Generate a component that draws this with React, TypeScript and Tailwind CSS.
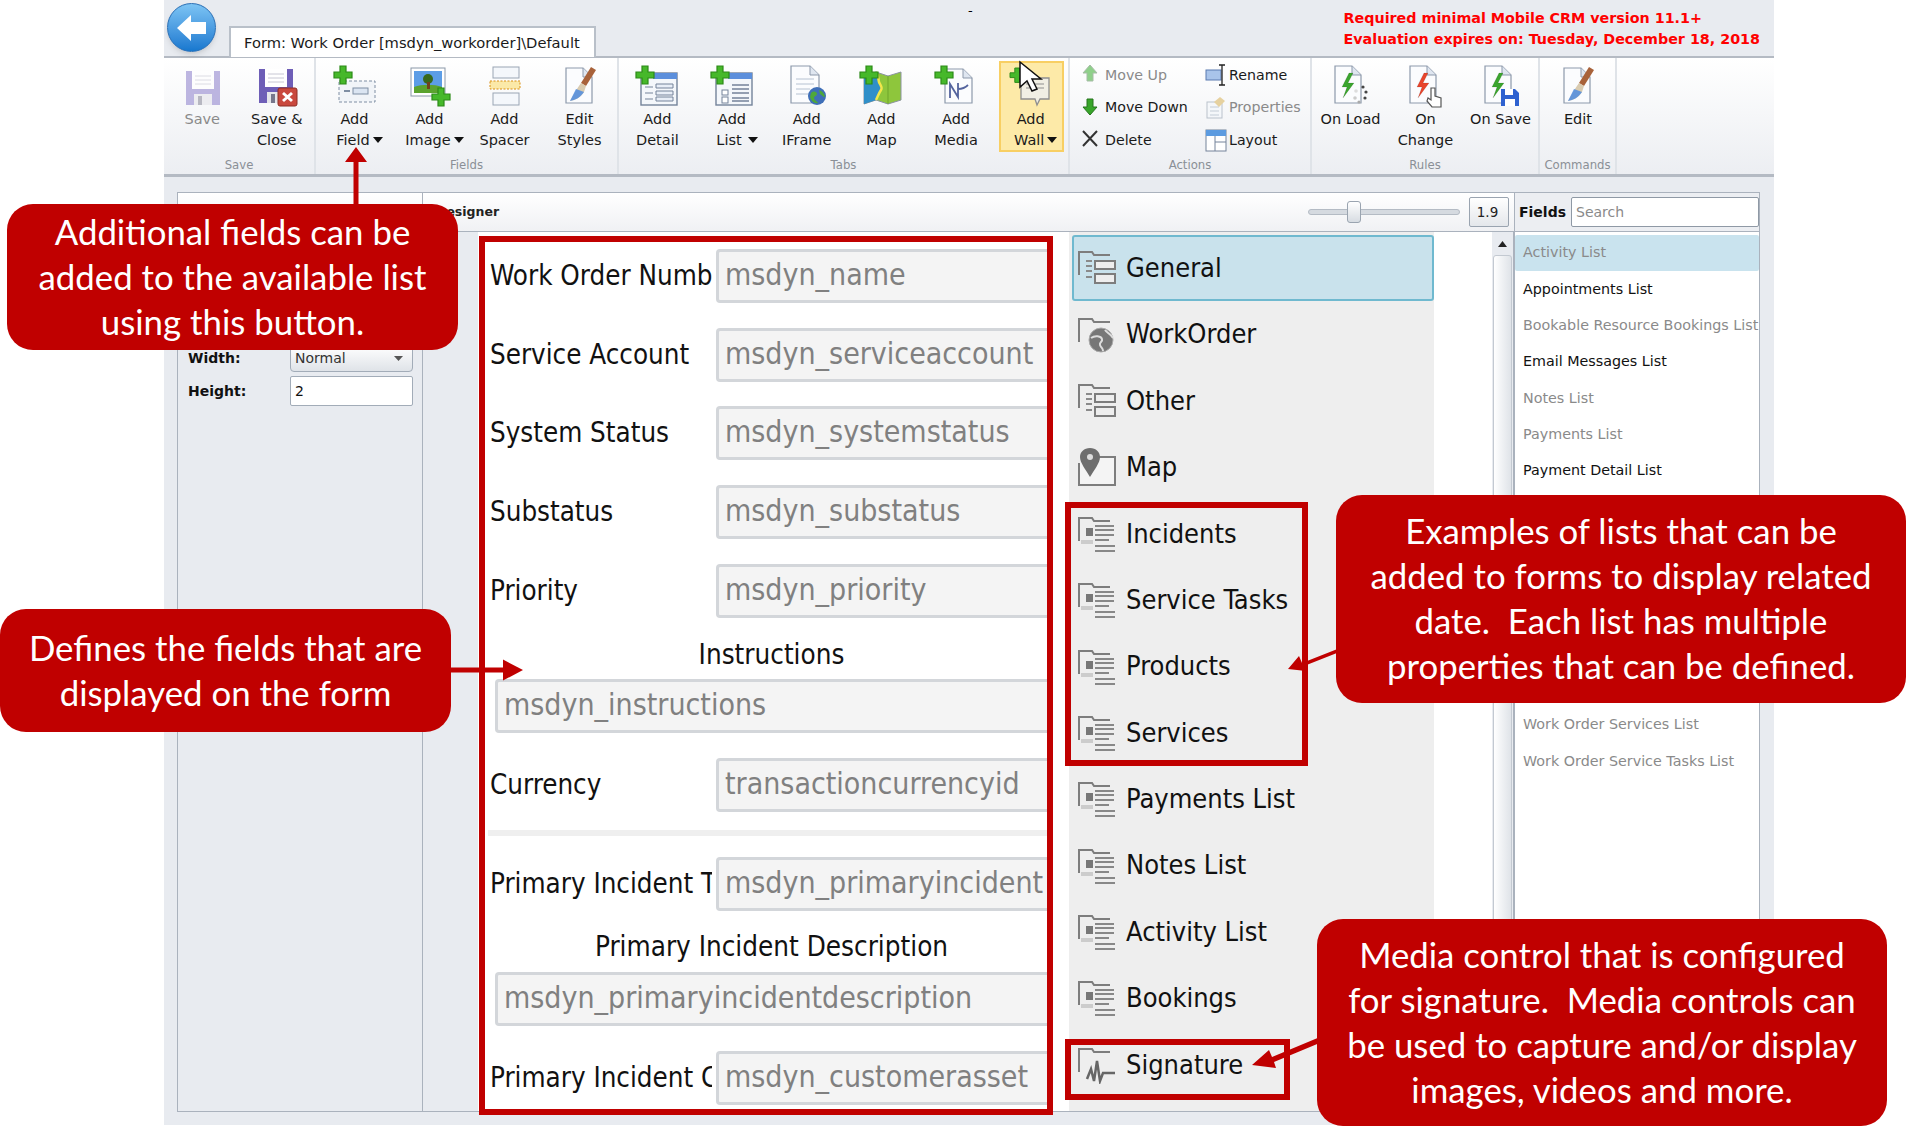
import React from 'react';

const Cross = ({ x, y, s = 1 }: { x: number; y: number; s?: number }) => (
  <path
    transform={`translate(${x} ${y}) scale(${s})`}
    d="M6 0h6v6h6v6h-6v6H6v-6H0V6h6z"
    fill="#46b82a"
    stroke="#2c8a18"
    strokeWidth="1.2"
  />
);

const Doc = ({ x = 10, y = 2, w = 26, h = 36 }: { x?: number; y?: number; w?: number; h?: number }) => (
  <g>
    <path d={`M${x} ${y}h${w - 9}l9 9v${h - 9}h-${w}z`} fill="#fbfcfe" stroke="#8d99ab" strokeWidth="1.2" />
    <path d={`M${x + w - 9} ${y}v9h9`} fill="#dfe6f0" stroke="#8d99ab" strokeWidth="1" />
  </g>
);

const Brush = () => (
  <g>
    <path d="M33 2l5 3-10 16-5-3z" fill="#a8623a" />
    <path d="M23 18l5 3-2 6c-3 5-8 8-14 9 3-5 6-11 11-18z" fill="#d9cbb0" />
    <path d="M12 36c5-1 10-3 14-9l-8-3c-2 4-4 8-6 12z" fill="#4f8de0" opacity=".85" />
  </g>
);

const Bolt = ({ color }: { color: string }) => <path d="M20 8l-7 14h5l-4 11 11-15h-6l5-10z" fill={color} stroke="#00000030" strokeWidth=".5" />;

const Win = ({ children }: { children: React.ReactNode }) => (
  <g>
    <rect x="6" y="8" width="36" height="32" fill="#f4f7fb" stroke="#74839a" strokeWidth="1.4" />
    <rect x="18" y="8" width="24" height="6" fill="#5c8fdc" />
    {children}
  </g>
);

const icons: Record<string, React.ReactNode> = {
  save: (
    <g opacity=".6">
      <path d="M6 6h34v34H6z" fill="#9488cf" />
      <rect x="12" y="6" width="22" height="18" fill="#fff" />
      <path d="M15 11h16M15 15h16M15 19h16" stroke="#c8c8d4" />
      <rect x="14" y="29" width="18" height="11" fill="#e5e5ea" />
      <rect x="18" y="31" width="4" height="9" fill="#8c8c9c" />
    </g>
  ),
  saveClose: (
    <g>
      <path d="M4 4h34v34H4z" fill="#6e5eb7" />
      <rect x="10" y="4" width="22" height="18" fill="#fff" />
      <path d="M13 9h16M13 13h16M13 17h16" stroke="#c8c8d4" />
      <rect x="12" y="27" width="18" height="11" fill="#e5e5ea" />
      <rect x="16" y="29" width="4" height="9" fill="#77778c" />
      <rect x="23" y="23" width="19" height="18" rx="2" fill="#c9483d" stroke="#8e2c24" />
      <path d="M28 28l9 8M37 28l-9 8" stroke="#fff" strokeWidth="3" />
    </g>
  ),
  addField: (
    <g>
      <rect x="6" y="16" width="36" height="21" fill="#f1f4f8" stroke="#7f8ea3" strokeDasharray="3 2" />
      <path d="M11 26h6" stroke="#7f8ea3" strokeWidth="2" />
      <rect x="20" y="23" width="15" height="6" fill="#dbe5f2" stroke="#7f8ea3" />
      <Cross x={1} y={1} />
    </g>
  ),
  addImage: (
    <g>
      <rect x="3" y="3" width="34" height="28" fill="#fff" stroke="#8a97a8" />
      <rect x="6" y="6" width="28" height="22" fill="#5c9de6" />
      <path d="M6 22c8-3 20-3 28 0v6H6z" fill="#5ba32e" />
      <circle cx="20" cy="14" r="5" fill="#38691c" />
      <rect x="19" y="17" width="3" height="7" fill="#70431c" />
      <Cross x={24} y={23} />
    </g>
  ),
  addSpacer: (
    <g>
      <rect x="10" y="2" width="26" height="11" fill="#f4f7fb" stroke="#9aa5b4" />
      <rect x="10" y="28" width="26" height="12" fill="#f4f7fb" stroke="#9aa5b4" />
      <rect x="7" y="16" width="30" height="8" fill="#fbe9a8" stroke="#d98f12" strokeDasharray="2 1.5" />
    </g>
  ),
  edit: (
    <g>
      <Doc x={8} y={3} w={26} h={35} />
      <Brush />
    </g>
  ),
  addDetail: (
    <g>
      <Win>
        <path d="M10 22h8M10 28h8M10 34h8" stroke="#74839a" />
        <path d="M21 19h17v4H21zM21 26h17v4H21zM21 32h17v4H21z" fill="#e8eef7" stroke="#74839a" />
      </Win>
      <Cross x={1} y={1} />
    </g>
  ),
  addList: (
    <g>
      <Win>
        <rect x="12" y="25" width="6" height="5" fill="#fff" stroke="#74839a" />
        <rect x="12" y="32" width="6" height="6" fill="#fff" stroke="#74839a" />
        <path d="M22 20h17M22 24h17M22 28h17M22 33h17M22 36h17" stroke="#74839a" strokeWidth="1.3" />
      </Win>
      <Cross x={1} y={1} />
    </g>
  ),
  iframe: (
    <g>
      <Doc x={6} y={1} w={28} h={37} />
      <path d="M11 14h18M11 19h18M11 24h14M11 29h12" stroke="#b6c2d2" />
      <circle cx="32" cy="31" r="9" fill="#3f6fb8" />
      <path d="M26 28c3-3 6-1 6 1s-3 2-3 4 3 3 4 5c-3 1-7-2-8-6zM34 25c3 1 6 4 6 7-2 0-3-2-5-3z" fill="#4ea83a" />
    </g>
  ),
  addMap: (
    <g>
      <path d="M5 11l12-4 12 4 13-4v28l-13 4-12-4-12 4z" fill="#8ec63c" stroke="#8b93a0" />
      <path d="M5 11l12-4c3 4 2 7 3 10s4 5 2 8-3 6-5 10l-12 4z" fill="#2f8fc9" />
      <path d="M17 7c3 4 2 7 3 10s4 5 2 8-3 6-5 10" fill="none" stroke="#f2e64a" strokeWidth="2.5" />
      <path d="M29 11v28" stroke="#6fa52a" />
      <Cross x={1} y={1} />
    </g>
  ),
  addMedia: (
    <g>
      <Doc x={11} y={4} w={27} h={34} />
      <path d="M16 33V19l8 13V18M24 24c4 0 8-2 10-4" fill="none" stroke="#54649e" strokeWidth="1.8" />
      <Cross x={1} y={1} />
    </g>
  ),
  addWall: (
    <g>
      <Cross x={1} y={3} s={0.8} />
      <path d="M12 13h28v21H31l-3 6-2-6H12z" fill="#f1efe4" stroke="#8f8f8f" strokeWidth="1.3" />
      <path d="M17 19h18M17 23h18" stroke="#8f8f8f" />
    </g>
  ),
  onLoad: (
    <g>
      <Doc x={6} y={1} w={26} h={37} />
      <Bolt color="#3ba52f" />
      <g fill="#444">
        <circle cx="34" cy="22" r="1.6" />
        <circle cx="37" cy="27" r="1.6" />
        <circle cx="36" cy="33" r="1.6" />
        <circle cx="30" cy="37" r="1.6" fill="#aaa" />
        <circle cx="26" cy="33" r="1.8" fill="#ccc" />
        <circle cx="27" cy="26" r="1.8" fill="#ddd" />
      </g>
    </g>
  ),
  onChange: (
    <g>
      <Doc x={6} y={1} w={26} h={37} />
      <Bolt color="#e8452c" />
      <path d="M27 23v12l-3-2-1 3 5 6h9v-9l-6-2v-8z" fill="#fff" stroke="#555" strokeWidth="1.2" />
    </g>
  ),
  onSave: (
    <g>
      <Doc x={6} y={1} w={26} h={37} />
      <Bolt color="#3ba52f" />
      <path d="M22 24h14l4 4v13H22z" fill="#2f62d0" />
      <rect x="26" y="24" width="8" height="6" fill="#fff" />
      <rect x="26" y="34" width="10" height="7" fill="#fff" />
    </g>
  ),
};

const small: Record<string, React.ReactNode> = {
  up: <path d="M9 1l7 8h-4v8H6V9H2z" fill="#8fd08a" stroke="#a6bca6" />,
  down: <path d="M9 19l7-8h-4V3H6v8H2z" fill="#38a52a" stroke="#24751c" />,
  del: <path d="M2 2l14 15M16 2L2 17" stroke="#333" strokeWidth="2" />,
  rename: (
    <g>
      <rect x="1" y="6" width="15" height="10" fill="#a9c4ea" stroke="#5b7bb0" />
      <path d="M14 1h6M17 1v20M14 21h6" stroke="#222" strokeWidth="1.3" />
    </g>
  ),
  props: (
    <g opacity=".55">
      <rect x="2" y="6" width="15" height="16" fill="#f4f7fb" stroke="#8a97a8" />
      <path d="M5 11h9M5 15h9M5 19h9" stroke="#9ab" />
      <path d="M9 6l6-5 5 4-6 6z" fill="#d9b256" />
    </g>
  ),
  layout: (
    <g>
      <rect x="1" y="1" width="20" height="21" fill="#fff" stroke="#74839a" />
      <rect x="1" y="1" width="20" height="6" fill="#5c9be0" />
      <path d="M10 7v15M10 13h11" stroke="#74839a" />
    </g>
  ),
};

const Caret = ({ far }: { far?: boolean }) => (
  <svg className={`inline-block mb-[2px] ${far ? 'ml-[6px]' : 'ml-[3px]'}`} width="10" height="6" viewBox="0 0 10 6">
    <path d="M0 0h10L5 6z" fill="#111" />
  </svg>
);

const RibbonBtn = ({ icon, a, b, caret, far, dim, hot }: { icon: string; a: string; b?: string; caret?: boolean; far?: boolean; dim?: boolean; hot?: boolean }) => (
  <div className={`relative w-[75.4px] h-[96px] flex flex-col items-center pt-[7px] text-[14.5px] leading-[21px] ${dim ? 'text-[#8a8a8a]' : 'text-[#1a1a1a]'}`}>
    {hot && <div className="absolute left-[6px] right-[4px] top-[3px] bottom-[2px] bg-[#fdeaa8] border-2 border-[#f8cf63]"></div>}
    <svg className="relative" width="44" height="44" viewBox="0 0 44 44">{icons[icon]}</svg>
    <div className="relative text-center whitespace-nowrap">
      <div>{a}</div>
      {b && <div className={caret ? 'pl-[10px]' : ''}>{b}{caret && <Caret far={far} />}</div>}
    </div>
  </div>
);

const Group = ({ label, className, children }: { label: string; className: string; children: React.ReactNode }) => (
  <div className={`flex flex-col h-full border-r-2 border-[#dfe3e8] ${className}`}>
    <div className="flex-1 flex min-h-0 pl-[1px]">{children}</div>
    <div className="h-[18px] text-center text-[11.7px] leading-[18px] text-[#8a8f96]">{label}</div>
  </div>
);

const SmallBtn = ({ icon, label, dim }: { icon: string; label: string; dim?: boolean }) => (
  <div className={`h-[32.500px] flex items-center text-[14.2px] ${dim ? 'text-[#8a8a8a]' : 'text-[#1a1a1a]'}`}>
    <svg className="shrink-0 mr-[2px]" width="22" height="23" viewBox="0 0 22 23">{small[icon]}</svg>
    {label}
  </div>
);

const bigFont = "font-['DejaVu_Sans_Condensed','DejaVu_Sans',sans-serif]";

const Input = ({ text, wide, label }: { text: string; wide?: boolean; label?: string }) => (
  <div className={`flex items-center h-[54px] ${bigFont} ${wide ? 'pl-[17px]' : 'pl-[12px]'}`}>
    {label && <div className="w-[222px] mr-[4px] shrink-0 overflow-hidden whitespace-nowrap text-[27.5px] text-[#111]">{label}</div>}
    <div className="flex-1 h-full flex items-center pl-[6px] pb-[3px] bg-[#f4f4f4] border-[3px] border-r-0 border-[#d3d6da] rounded-l-[4px] text-[30px] text-[#808080] overflow-hidden whitespace-nowrap">{text}</div>
  </div>
);

const CenterLabel = ({ text, className }: { text: string; className: string }) => (
  <div className={`h-[24px] leading-[24px] text-center text-[27.6px] text-[#111] pl-[18px] ${bigFont} ${className}`}>{text}</div>
);

const tabIcon = (kind: string) => {
  const folder = <path d="M2 26V3h13l2 3h16" fill="none" stroke="#7d7d7d" strokeWidth="2" />;
  if (kind === 'form') return (
    <g>
      {folder}
      <path d="M9 12h6M9 17h6M9 22h6M9 28h6" stroke="#8a8a8a" strokeWidth="2" />
      <rect x="18" y="12" width="20" height="8" fill="#eee" stroke="#7d7d7d" strokeWidth="2" />
      <rect x="18" y="25" width="20" height="9" fill="#eee" stroke="#7d7d7d" strokeWidth="2" />
    </g>
  );
  if (kind === 'globe') return (
    <g>
      {folder}
      <circle cx="24" cy="24" r="12" fill="#777" stroke="#aaa" />
      <path d="M14 22c4-3 10-2 11 1s-3 3-2 6 3 3 3 6M28 14c2 3 6 4 8 8" fill="none" stroke="#ddd" strokeWidth="2" />
    </g>
  );
  if (kind === 'map') return (
    <g>
      <path d="M20 9h18v28H2V15" fill="#f4f4f4" stroke="#7d7d7d" strokeWidth="2" />
      <path d="M13 0c6 0 10 4 10 9 0 6-6 13-10 20C9 22 3 15 3 9c0-5 4-9 10-9z" fill="#6e6e6e" />
      <circle cx="13" cy="9" r="3" fill="#ddd" />
    </g>
  );
  if (kind === 'sig') return (
    <g>
      {folder}
      <path d="M10 33l4-10 3 12 3-20 3 20 3-8h12" fill="none" stroke="#666" strokeWidth="2.5" />
    </g>
  );
  return (
    <g>
      {folder}
      <rect x="9" y="13" width="7" height="8" fill="#777" />
      <path d="M18 11h19M18 15h19M18 20h19M18 25h14M18 31h20M18 36h20" stroke="#888" strokeWidth="2" />
      <path d="M4 27h12" stroke="#ccc" strokeWidth="4" />
    </g>
  );
};

const tabs = [
  { label: 'General', kind: 'form' },
  { label: 'WorkOrder', kind: 'globe' },
  { label: 'Other', kind: 'form' },
  { label: 'Map', kind: 'map' },
  { label: 'Incidents', kind: 'list' },
  { label: 'Service Tasks', kind: 'list' },
  { label: 'Products', kind: 'list' },
  { label: 'Services', kind: 'list' },
  { label: 'Payments List', kind: 'list' },
  { label: 'Notes List', kind: 'list' },
  { label: 'Activity List', kind: 'list' },
  { label: 'Bookings', kind: 'list' },
  { label: 'Signature', kind: 'sig' },
];

const fieldsTop = [
  { label: 'Activity List', dim: true, active: true },
  { label: 'Appointments List' },
  { label: 'Bookable Resource Bookings List', dim: true },
  { label: 'Email Messages List' },
  { label: 'Notes List', dim: true },
  { label: 'Payments List', dim: true },
  { label: 'Payment Detail List' },
];

const Callout = ({ className, lines }: { className: string; lines: string[] }) => (
  <div className={`absolute flex flex-col items-center justify-center pb-[2px] bg-[#c00000] rounded-[26px] text-white text-[34.8px] leading-[45px] font-['Lato','Open_Sans',sans-serif] ${className}`}>
    {lines.map(l => <div key={l} className="whitespace-pre">{l}</div>)}
  </div>
);

export default function App() {
  return (
    <div className="relative w-[1906px] h-[1135px] bg-white overflow-hidden font-['DejaVu_Sans',sans-serif]">
      <div className="ml-[164px] w-[1610px] h-[1125px] bg-[#e8ebf0] flex flex-col">
        {/* title strip */}
        <div className="h-[56px] shrink-0 flex items-start">
          <div className="relative mt-[3px] ml-[3px] w-[49px] h-[49px] rounded-full border border-[#2a6fb5] bg-gradient-to-b from-[#7cc4f4] to-[#1678cf] flex items-center justify-center shadow-md">
            <svg width="30" height="26" viewBox="0 0 30 26"><path d="M0 13L14 0v7h15v12H14v7z" fill="#fff" /></svg>
          </div>
          <div className="relative z-10 mt-[26px] ml-[13px] w-[367px] h-[31px] bg-white border-2 border-b-0 border-[#b9c0c9] pl-[13px] text-[14.7px] leading-[30px] text-[#1a1a1a] whitespace-nowrap">
            {'Form: Work Order [msdyn_workorder]\\Default'}
          </div>
          <div className="ml-[372px] mt-[3px] text-[13px] leading-[16px] text-black">-</div>
          <div className="ml-auto mr-[14px] mt-[8px] text-[14.3px] leading-[21px] font-bold text-[#ff0000] whitespace-nowrap">
            <div>Required minimal Mobile CRM version 11.1+</div>
            <div>Evaluation expires on: Tuesday, December 18, 2018</div>
          </div>
        </div>

        {/* ribbon */}
        <div className="h-[121px] shrink-0 flex border-t-2 border-b-[3px] border-[#b4bac3] bg-gradient-to-b from-white to-[#eceef2]">
          <Group label="Save" className="w-[152px]">
            <RibbonBtn icon="save" a="Save" dim />
            <RibbonBtn icon="saveClose" a="Save &" b="Close" />
          </Group>
          <Group label="Fields" className="w-[303px]">
            <RibbonBtn icon="addField" a="Add" b="Field" caret />
            <RibbonBtn icon="addImage" a="Add" b="Image" caret />
            <RibbonBtn icon="addSpacer" a="Add" b="Spacer" />
            <RibbonBtn icon="edit" a="Edit" b="Styles" />
          </Group>
          <Group label="Tabs" className="w-[451px]">
            <RibbonBtn icon="addDetail" a="Add" b="Detail" />
            <RibbonBtn icon="addList" a="Add" b="List" caret far />
            <RibbonBtn icon="iframe" a="Add" b="IFrame" />
            <RibbonBtn icon="addMap" a="Add" b="Map" />
            <RibbonBtn icon="addMedia" a="Add" b="Media" />
            <RibbonBtn icon="addWall" a="Add" b="Wall" caret hot />
          </Group>
          <Group label="Actions" className="w-[242px]">
            <div className="grid grid-cols-[124px_1fr] pl-[10px] pt-[1px] content-start">
              <SmallBtn icon="up" label="Move Up" dim />
              <SmallBtn icon="rename" label="Rename" />
              <SmallBtn icon="down" label="Move Down" />
              <SmallBtn icon="props" label="Properties" dim />
              <SmallBtn icon="del" label="Delete" />
              <SmallBtn icon="layout" label="Layout" />
            </div>
          </Group>
          <Group label="Rules" className="w-[228px]">
            <RibbonBtn icon="onLoad" a="On Load" />
            <RibbonBtn icon="onChange" a="On" b="Change" />
            <RibbonBtn icon="onSave" a="On Save" />
          </Group>
          <Group label="Commands" className="w-[77px]">
            <RibbonBtn icon="edit" a="Edit" />
          </Group>
        </div>

        {/* panels */}
        <div className="flex-1 min-h-0 flex pt-[15px] pb-[13px] pl-[13px]">
          <div className="w-[246px] shrink-0 flex flex-col border border-[#aab2bd]">
            <div className="h-[40px] shrink-0 border-b border-[#aab2bd] bg-gradient-to-b from-white to-[#f0f1f4]"></div>
            <div className="pl-[10px] pt-[112px] text-[14px] font-bold text-[#111]">
              <div className="flex items-center h-[27px] mb-[4px]">
                <div className="w-[102px]">Width:</div>
                <div className="w-[123px] h-full flex items-center justify-between px-[4px] pr-[9px] font-normal text-[#333] border border-[#a2acb8] rounded-b-[4px] bg-gradient-to-b from-white to-[#dfe3e8]">
                  Normal
                  <svg width="9" height="5" viewBox="0 0 9 5"><path d="M0 0h9L4.5 5z" fill="#555" /></svg>
                </div>
              </div>
              <div className="flex items-center h-[30px]">
                <div className="w-[102px]">Height:</div>
                <div className="w-[123px] h-full flex items-center px-[4px] font-normal bg-white border border-[#a2acb8] rounded-[2px]">2</div>
              </div>
            </div>
          </div>

          <div className="w-[1091px] shrink-0 flex flex-col border-y border-[#aab2bd]">
            <div className="h-[39px] shrink-0 flex items-center border-b border-[#aab2bd] bg-gradient-to-b from-white to-[#f0f1f4]">
              <div className="pl-[13px] text-[12.500px] font-bold text-[#222]">Designer</div>
              <div className="relative ml-auto w-[152px] h-[6px] rounded-full bg-[#d5dae0] border border-[#b4bbc4]">
                <div className="absolute left-[38px] -top-[9px] w-[14px] h-[22px] rounded-[3px] border border-[#9aa4b0] bg-gradient-to-b from-white to-[#d7dce2]"></div>
              </div>
              <div className="ml-[9px] mr-[5px] w-[40px] h-[30px] flex items-center justify-center pr-[3px] text-[13.500px] text-[#222] border border-[#9aa4b0] rounded-[2px] bg-gradient-to-b from-white to-[#e4e7eb]">1.9</div>
            </div>
            <div className="flex-1 min-h-0 flex bg-white">
              <div className="w-[55px] shrink-0 bg-[#e8ebf0]"></div>
              <div className="w-[591px] shrink-0 pt-[17px] pr-[22px] overflow-hidden">
                <Input label="Work Order Number" text="msdyn_name" />
                <div className="h-[25px]"></div>
                <Input label="Service Account" text="msdyn_serviceaccount" />
                <div className="h-[24px]"></div>
                <Input label="System Status" text="msdyn_systemstatus" />
                <div className="h-[25px]"></div>
                <Input label="Substatus" text="msdyn_substatus" />
                <div className="h-[25px]"></div>
                <Input label="Priority" text="msdyn_priority" />
                <CenterLabel text="Instructions" className="mt-[25px] mb-[12px]" />
                <Input wide text="msdyn_instructions" />
                <div className="h-[25px]"></div>
                <Input label="Currency" text="transactioncurrencyid" />
                <div className="mt-[18px] mb-[21px] ml-[10px] h-[6px] bg-[#efefef]"></div>
                <Input label="Primary Incident Type" text="msdyn_primaryincident" />
                <CenterLabel text="Primary Incident Description" className="mt-[24px] mb-[13px]" />
                <Input wide text="msdyn_primaryincidentdescription" />
                <div className="h-[25px]"></div>
                <Input label="Primary Incident Customer Asset" text="msdyn_customerasset" />
              </div>
              <div className={`w-[365px] shrink-0 bg-[#eeeeee] pt-[3px] ${bigFont}`}>
                {tabs.map((t, i) => (
                  <div
                    key={t.label}
                    className={`h-[66.4px] flex items-center text-[27px] text-[#111] whitespace-nowrap ${i === 0 ? 'bg-[#c9e2ec] border-2 border-[#6fb9cf] rounded-[3px] ml-[3px] pl-[3px]' : 'pl-[8px]'}`}
                  >
                    <svg className="shrink-0 mr-[9px]" width="40" height="38" viewBox="0 0 40 38">{tabIcon(t.kind)}</svg>
                    {t.label}
                  </div>
                ))}
              </div>
              <div className="w-[58px] shrink-0"></div>
              <div className="w-[22px] shrink-0 flex flex-col items-center border-r border-[#aab2bd] bg-[#e8ebf0]">
                <svg className="mt-[9px] mb-[8px]" width="9" height="6" viewBox="0 0 9 6"><path d="M4.5 0L9 6H0z" fill="#222" /></svg>
                <div className="flex-1 w-[19px] rounded-t-[3px] border border-[#c3c9d1] bg-gradient-to-r from-white to-[#dfe3e8]"></div>
              </div>
            </div>
          </div>

          <div className="w-[246px] shrink-0 flex flex-col border border-[#aab2bd]">
            <div className="h-[39px] shrink-0 flex items-center border-b border-[#aab2bd] bg-[#eceef2]">
              <div className="pl-[4px] w-[56px] text-[14px] font-bold text-[#111]">Fields</div>
              <div className="flex-1 h-[30px] flex items-center pl-[4px] text-[14px] text-[#8a8a8a] bg-white border border-[#8f99a5] rounded-[2px]">Search</div>
            </div>
            <div className="flex-1 min-h-0 bg-white pt-[3px] text-[14.3px] whitespace-nowrap overflow-hidden">
              {fieldsTop.map(f => (
                <div
                  key={f.label}
                  className={`h-[36.3px] flex items-center pl-[8px] ${f.active ? 'bg-[#c9e3ee] rounded-[2px]' : ''} ${f.dim ? 'text-[#8a8a8a]' : 'text-[#111]'}`}
                >
                  {f.label}
                </div>
              ))}
              <div className="h-[217.8px]"></div>
              <div className="h-[36.3px] flex items-center pl-[8px] text-[#8a8a8a]">Work Order Services List</div>
              <div className="h-[36.3px] flex items-center pl-[8px] text-[#8a8a8a]">Work Order Service Tasks List</div>
            </div>
          </div>
        </div>
      </div>

      {/* annotations over the screenshot */}
      <svg className="absolute left-[1016px] top-[60px]" width="32" height="40" viewBox="0 0 32 40">
        <path d="M4 2v25l7-6 5 10 5-2-5-10h9z" fill="#fff" stroke="#111" strokeWidth="1.5" />
      </svg>
      <div className="absolute left-[479px] top-[236px] w-[574px] h-[879px] border-[6px] border-[#c00000]"></div>
      <div className="absolute left-[1065px] top-[502px] w-[243px] h-[264px] border-[6px] border-[#c00000]"></div>
      <div className="absolute left-[1065px] top-[1039px] w-[225px] h-[61px] border-[6px] border-[#c00000]"></div>
      <svg className="absolute left-0 top-0 pointer-events-none" width="1906" height="1135" viewBox="0 0 1906 1135">
        <path d="M353.5 210v-48h-8.5l11-15 11 15h-8.5v48z" fill="#c00000" />
        <path d="M445 667.500h58v-8l20 10.500-20 10.500v-8h-58z" fill="#c00000" />
        <path d="M1340 648l-38 15-3-7-11 13 18 2-2-5 38-15z" fill="#c00000" />
        <path d="M1320 1037l-48 20-3-7-17 15 24 3-2-6 48-20z" fill="#c00000" />
      </svg>
      <Callout className="left-[7px] top-[204px] w-[451px] h-[146px]" lines={['Additional fields can be', 'added to the available list', 'using this button.']} />
      <Callout className="left-0 top-[609px] w-[451px] h-[123px]" lines={['Defines the fields that are', 'displayed on the form']} />
      <Callout className="left-[1336px] top-[495px] w-[570px] h-[208px]" lines={['Examples of lists that can be', 'added to forms to display related', 'date.  Each list has multiple', 'properties that can be defined.']} />
      <Callout className="left-[1317px] top-[919px] w-[570px] h-[207px]" lines={['Media control that is configured', 'for signature.  Media controls can', 'be used to capture and/or display', 'images, videos and more.']} />
    </div>
  );
}
